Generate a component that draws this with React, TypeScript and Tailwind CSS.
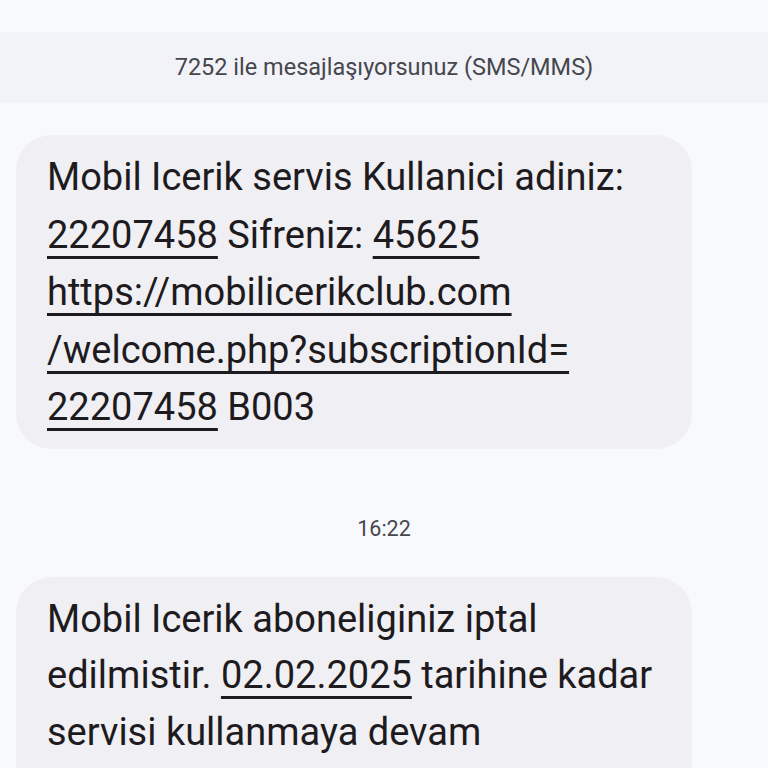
const link = "underline decoration-[3px] underline-offset-[8px]";

function Bubble({ children, extra }: { children: React.ReactNode; extra: string }) {
  return (
    <div
      className={`mx-4 w-[676px] rounded-[36px] bg-[#f0eff4] pl-[31px] pr-4 pt-[14px] text-[38px] text-[#1d1b20] ${extra}`}
    >
      {children}
    </div>
  );
}

export default function App() {
  return (
    <div className="h-[768px] w-[768px] overflow-hidden bg-[#f8f9fd] font-['Roboto',sans-serif]">
      <div className="h-8" />
      <div className="flex h-[71px] items-center justify-center bg-[#f2f3f8] text-[23.5px] text-[#46464c]">
        7252 ile mesajlaşıyorsunuz (SMS/MMS)
      </div>
      <div className="h-8" />

      <Bubble extra="leading-[57.5px] pb-[12px]">
        <div>Mobil Icerik servis Kullanici adiniz:</div>
        <div>
          <span className={link}>22207458</span> Sifreniz:{" "}
          <span className={link}>45625</span>
        </div>
        <div>
          <span className={link}>https://mobilicerikclub.com</span>
        </div>
        <div>
          <span className={link}>/welcome.php?subscriptionId=</span>
        </div>
        <div>
          <span className={link}>22207458</span> B003
        </div>
      </Bubble>

      <div className="pt-[68px] pb-[36px] text-center text-[21.5px] leading-[24px] text-[#46464c]">
        16:22
      </div>

      {/* continues below the fold */}
      <Bubble extra="leading-[56.5px] pb-[64px]">
        <div>Mobil Icerik aboneliginiz iptal</div>
        <div>
          edilmistir. <span className={link}>02.02.2025</span> tarihine kadar
        </div>
        <div>servisi kullanmaya devam</div>
      </Bubble>
    </div>
  );
}
